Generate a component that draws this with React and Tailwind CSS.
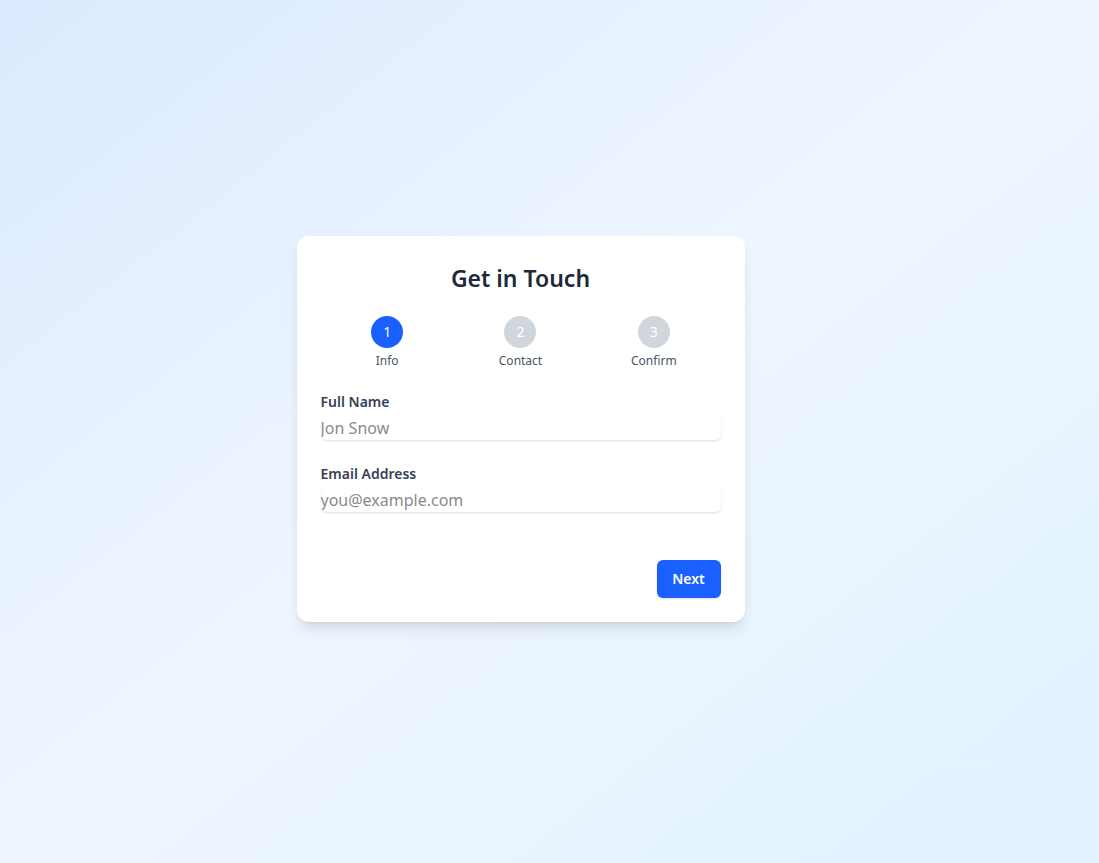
import React from "react";

const steps = [
  { n: 1, label: "Info", active: true },
  { n: 2, label: "Contact", active: false },
  { n: 3, label: "Confirm", active: false },
];

export default function App() {
  return (
    <div
      className="min-h-screen w-full flex items-center justify-center bg-gradient-to-br from-blue-100 via-blue-50 to-sky-100"
      style={{ fontFamily: '"Noto Sans", "Open Sans", sans-serif' }}
    >
      <div className="w-[448px] mr-[58px] mb-[5px] bg-white rounded-xl shadow-lg px-6 pt-6 pb-6">
        <h1 className="mt-[2px] text-center text-[23px] leading-8 font-semibold text-gray-800">Get in Touch</h1>
        <div className="flex mt-[22px]">
          {steps.map((s) => (
            <div key={s.n} className="flex-1 flex flex-col items-center">
              <div
                className={
                  s.active
                    ? "w-8 h-8 rounded-full flex items-center justify-center text-sm text-white bg-[#1a5fff]"
                    : "w-8 h-8 rounded-full flex items-center justify-center text-sm text-white bg-gray-300"
                }
              >
                {s.n}
              </div>
              <div className="mt-[5px] text-xs leading-4 text-gray-600">{s.label}</div>
            </div>
          ))}
        </div>
        <div className="mt-[23px]">
          <label className="block text-sm leading-5 font-semibold text-gray-700">Full Name</label>
          <input
            type="text"
            placeholder="Jon Snow"
            className="block w-full h-6 mt-[4px] rounded-md shadow-sm outline-none text-base placeholder:text-[#8a8a8a] text-gray-800"
          />
        </div>
        <div className="mt-[24px]">
          <label className="block text-sm leading-5 font-semibold text-gray-700">Email Address</label>
          <input
            type="email"
            placeholder="you@example.com"
            className="block w-full h-6 mt-[4px] rounded-md shadow-sm outline-none text-base placeholder:text-[#8a8a8a] text-gray-800"
          />
        </div>
        <div className="flex justify-end mt-12">
          <button className="w-16 h-[38px] rounded-md bg-[#1a5fff] text-white text-sm font-semibold shadow-sm">
            Next
          </button>
        </div>
      </div>
    </div>
  );
}
